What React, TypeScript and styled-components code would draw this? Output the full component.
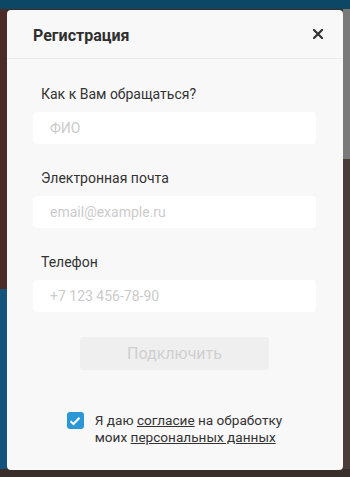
import React from "react";
import styled, { createGlobalStyle } from "styled-components";

const Global = createGlobalStyle`
  html, body { margin: 0; padding: 0; }
  body {
    width: 350px;
    height: 477px;
    overflow: hidden;
    font-family: Roboto, "Liberation Sans", Arial, sans-serif;
    background:
      linear-gradient(to bottom, #0c4866 0, #0c4866 9px, transparent 9px),
      linear-gradient(to right, #4a2b27 0, #3d2421 7px, transparent 7px, transparent 343px, #7a7a7a 343px),
      #3a2b27;
  }
`;

const Backdrop = styled.div`
  position: relative;
  width: 350px;
  height: 477px;
  display: flex;
  flex-direction: column;
  align-items: center;
  padding-top: 10px;
  box-sizing: border-box;
`;

const BgPatch = styled.div<{ $top: number; $h: number; $left: number; $w: number; $bg: string }>`
  position: absolute;
  top: ${(p) => p.$top}px;
  left: ${(p) => p.$left}px;
  width: ${(p) => p.$w}px;
  height: ${(p) => p.$h}px;
  background: ${(p) => p.$bg};
`;

const Modal = styled.div`
  position: relative;
  z-index: 1;
  width: 336px;
  height: 460px;
  background: #f8f8f8;
  border-radius: 4px;
  display: flex;
  flex-direction: column;
  box-sizing: border-box;
`;

const Header = styled.div`
  height: 48px;
  display: flex;
  align-items: center;
  justify-content: space-between;
  padding: 0 18px 0 26px;
  border-bottom: 1px solid #ebebeb;
`;

const Title = styled.h2`
  margin: 0;
  font-size: 16px;
  font-weight: 700;
  color: #2f2f2f;
  padding-top: 2px;
`;

const Close = styled.button`
  border: none;
  background: none;
  padding: 0;
  width: 14px;
  height: 14px;
  display: flex;
  align-items: center;
  justify-content: center;
  cursor: pointer;
`;

const Body = styled.div`
  display: flex;
  flex-direction: column;
  padding: 25px 27px 0 26px;
`;

const Field = styled.div`
  display: flex;
  flex-direction: column;
  gap: 8px;
  margin-bottom: 24px;
`;

const Label = styled.label`
  font-size: 14px;
  line-height: 20px;
  color: #333;
  padding-left: 8px;
`;

const Input = styled.input`
  height: 32px;
  border: none;
  border-radius: 4px;
  background: #fff;
  padding: 0 17px;
  font-family: Roboto, "Liberation Sans", Arial, sans-serif;
  font-size: 14px;
  color: #333;
  box-sizing: border-box;
  outline: none;
  &::placeholder { color: #cbcbcb; }
`;

const Submit = styled.button`
  align-self: center;
  width: 189px;
  height: 33px;
  margin-top: 1px;
  border: none;
  border-radius: 3px;
  background: #efefef;
  color: #cfcfcf;
  font-family: Roboto, "Liberation Sans", Arial, sans-serif;
  font-size: 16px;
`;

const Consent = styled.div`
  display: flex;
  align-items: flex-start;
  justify-content: center;
  gap: 11px;
  margin-top: 42px;
`;

const Box = styled.span`
  width: 17px;
  height: 17px;
  border-radius: 3px;
  background: #2a97d6;
  display: flex;
  align-items: center;
  justify-content: center;
  flex: none;
`;

const ConsentText = styled.p`
  margin: 0;
  font-size: 13.6px;
  line-height: 17px;
  color: #333;
`;

const Link = styled.a`
  color: #333;
  text-decoration: underline;
`;

export default function App() {
  return (
    <>
      <Global />
      <Backdrop>
        <BgPatch $top={9} $h={280} $left={0} $w={7} $bg="#4a2b27" />
        <BgPatch $top={289} $h={180} $left={0} $w={7} $bg="#15527c" />
        <BgPatch $top={9} $h={150} $left={343} $w={7} $bg="#7a7a7a" />
        <BgPatch $top={159} $h={310} $left={343} $w={7} $bg="#4a3d37" />
        <BgPatch $top={469} $h={8} $left={0} $w={350} $bg="#3a2e2a" />
        <Modal>
          <Header>
            <Title>Регистрация</Title>
            <Close aria-label="Закрыть">
              <svg width="10" height="10" viewBox="0 0 10 10">
                <path d="M1 1L9 9M9 1L1 9" stroke="#333" strokeWidth="2.2" strokeLinecap="square" />
              </svg>
            </Close>
          </Header>
          <Body>
            <Field>
              <Label>Как к Вам обращаться?</Label>
              <Input placeholder="ФИО" />
            </Field>
            <Field>
              <Label>Электронная почта</Label>
              <Input placeholder="email@example.ru" />
            </Field>
            <Field>
              <Label>Телефон</Label>
              <Input placeholder="+7 123 456-78-90" />
            </Field>
            <Submit disabled>Подключить</Submit>
            <Consent>
              <Box>
                <svg width="12" height="10" viewBox="0 0 12 10">
                  <path d="M1.5 5.2L4.5 8L10.5 1.8" stroke="#fff" strokeWidth="2" fill="none" />
                </svg>
              </Box>
              <ConsentText>
                Я даю <Link href="#">согласие</Link> на обработку
                <br />
                моих <Link href="#">персональных данных</Link>
              </ConsentText>
            </Consent>
          </Body>
        </Modal>
      </Backdrop>
    </>
  );
}
